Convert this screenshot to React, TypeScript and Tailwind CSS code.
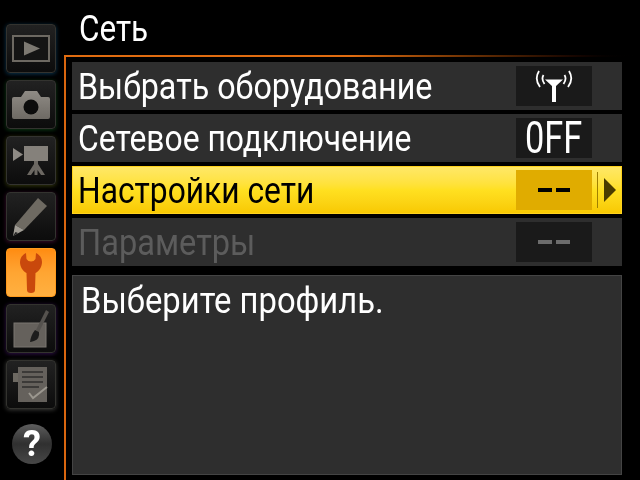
const font = { fontFamily: '"Roboto", "Liberation Sans", sans-serif' };

function Tile({ glow, active, children }: { glow: string; active?: boolean; children: React.ReactNode }) {
  return (
    <div className={`w-[50px] h-[49px] rounded-[4px] border flex items-center justify-center ${glow} ${active ? "border-[#ff9a1c] bg-gradient-to-b from-[#ff8c10] via-[#ffa532] to-[#ffb040]" : "border-[#33332f] bg-gradient-to-b from-[#222222] to-[#0c0c0c]"}`}>
      {children}
    </div>
  );
}

function Play() {
  return (
    <svg width="38" height="27" viewBox="0 0 38 27">
      <rect x="1" y="1" width="36" height="25" fill="#141414" stroke="#6d6962" strokeWidth="2" />
      <path d="M12 6.5 L28 13.5 L12 20.5 Z" fill="#7d7972" />
    </svg>
  );
}
function Camera() {
  return (
    <svg width="38" height="28" viewBox="0 0 38 28">
      <defs>
        <linearGradient id="cam" x1="0" y1="0" x2="0" y2="1">
          <stop offset="0" stopColor="#8f8b85" />
          <stop offset="1" stopColor="#6e6a64" />
        </linearGradient>
      </defs>
      <path d="M2 6 Q0 6 0 8 V26 Q0 28 2 28 H36 Q38 28 38 26 V8 Q38 6 36 6 H29 L25 0 H13 L9 6 Z" fill="url(#cam)" />
      <circle cx="19" cy="16" r="7.5" fill="#0c0c0c" />
    </svg>
  );
}
function Movie() {
  return (
    <svg width="36" height="30" viewBox="0 0 36 30">
      <path d="M0 2 L10 8.5 L0 15 Z" fill="#8e8a84" />
      <rect x="11" y="0" width="24" height="15" fill="#85817b" />
      <path d="M21 15 H25 V18 L32 29 H28 L24.5 24 V29 H21.5 V24 L18 29 H14 L21 18 Z" fill="#6c6862" />
    </svg>
  );
}
function Pencil() {
  return (
    <svg width="36" height="40" viewBox="0 0 36 40">
      <path d="M25 1 L34 9 L11 33 L2 28 Z" fill="#6e6a62" />
      <path d="M2 28 L11 33 L0 39 Z" fill="#a09c94" />
      <path d="M2.5 35 L5 36 L0 39 Z" fill="#222" />
    </svg>
  );
}
function Wrench() {
  return (
    <svg width="22" height="40" viewBox="0 0 22 40">
      <path d="M6 0 C2 2 0 5 0 9 C0 14 3 18 6.5 20 L7 37 Q7 40 11 40 Q15 40 15 37 L15.5 20 C19 18 22 14 22 9 C22 5 20 2 16 0 L15.5 6 Q14 8.5 11 8.5 Q8 8.5 6.5 6 Z" fill="#c9480c" />
    </svg>
  );
}
function Retouch() {
  return (
    <svg width="36" height="38" viewBox="0 0 36 38">
      <rect x="1" y="13" width="32" height="24" fill="#65615c" stroke="#7a7670" />
      <path d="M33 0 L36 2 L26 22 L23 20 Z" fill="#55524e" />
      <path d="M22 20 L26 22 Q27 29 21 31 Q18 32 17 32 Q18 25 22 20 Z" fill="#1c1c1c" />
    </svg>
  );
}
function Recent() {
  return (
    <svg width="36" height="36" viewBox="0 0 36 36">
      <rect x="0" y="6" width="6" height="9" fill="#6d6962" />
      <rect x="5" y="0" width="29" height="35" fill="#65615c" />
      <path d="M9 5 H30 M9 10 H30 M9 15 H30 M9 20 H26" stroke="#2f2e2c" strokeWidth="1.5" />
      <path d="M16 26 L20 31 L34 20" stroke="#9b978f" strokeWidth="2" fill="none" />
    </svg>
  );
}
function Antenna() {
  return (
    <svg width="38" height="33" viewBox="0 0 38 33">
      <path d="M10 9.5 H28 L21 16 V32 H17 V16 Z" fill="#fff" />
      <path d="M4 1 Q-1 9 5 17 M8.5 5 Q6 9 9.5 14 M34 1 Q39 9 33 17 M29.5 5 Q32 9 28.5 14" stroke="#fff" strokeWidth="1.8" fill="none" />
    </svg>
  );
}

function Label({ children, className, x }: { children: React.ReactNode; className: string; x: string }) {
  return (
    <span className={`inline-block origin-left whitespace-nowrap leading-none ${x} ${className}`} style={font}>{children}</span>
  );
}

function Row({ label, value, tone, x }: { label: string; value: React.ReactNode; tone?: "sel" | "dim"; x: string }) {
  const sel = tone === "sel";
  const dim = tone === "dim";
  return (
    <div className={`flex items-center h-[48px] w-[550px] ${sel ? "bg-gradient-to-b from-[#ffe868] via-[#ffe020] to-[#f8c800] shadow-[inset_0_0_0_1px_#ffd21e]" : "bg-[#2e2e2e]"}`}>
      <div className="pl-[6px] flex-1 min-w-0">
        <Label x={x} className={`text-[37px] ${sel ? "text-black" : dim ? "text-[#5c5c5c]" : "text-white"}`}>{label}</Label>
      </div>
      <div className={`w-[76px] h-[40px] flex items-center justify-center ${sel ? "bg-[#e0ac00]" : "bg-[#1a1a1a]"}`}>{value}</div>
      <div className="w-[30px] h-full flex items-center justify-end">
        {sel && (
          <div className="flex items-center gap-[6px] pr-[6px]">
            <div className="w-px h-[36px] bg-[#a08000]" />
            <svg width="12" height="24" viewBox="0 0 12 24"><path d="M0 0 L12 12 L0 24 Z" fill="#4a3c00" /></svg>
          </div>
        )}
      </div>
    </div>
  );
}

function Dashes({ color }: { color: string }) {
  return (
    <div className="flex gap-[4px]">
      <div className={`w-[14px] h-[4px] ${color}`} />
      <div className={`w-[14px] h-[4px] ${color}`} />
    </div>
  );
}

export default function App() {
  return (
    <div className="w-[640px] h-[480px] bg-black flex overflow-hidden blur-[0.4px]">
      <div className="w-[64px] shrink-0 pl-[6px] pt-[24px] flex flex-col gap-[7px]">
        <Tile glow="shadow-[0_1px_4px_#0a3550]"><Play /></Tile>
        <Tile glow="shadow-[0_1px_4px_#0c3a14]"><Camera /></Tile>
        <Tile glow="shadow-[0_1px_4px_#34380c]"><Movie /></Tile>
        <Tile glow="shadow-[0_1px_4px_#3a0c2c]"><Pencil /></Tile>
        <Tile glow="" active><Wrench /></Tile>
        <Tile glow="shadow-[0_1px_4px_#30104a]"><Retouch /></Tile>
        <Tile glow="shadow-[0_1px_4px_#3a3a38]"><Recent /></Tile>
        <div className="ml-[6px] mt-[8px] w-[40px] h-[40px] rounded-full bg-gradient-to-b from-[#5e5e5e] via-[#303030] to-[#484848] flex items-center justify-center text-white text-[36px] font-bold leading-none" style={font}>?</div>
      </div>
      <div className="flex-1 flex flex-col">
        <div className="h-[55px] pl-[15px] pt-[10px] text-white">
          <Label x="scale-x-[0.85]" className="text-[37px]">Сеть</Label>
        </div>
        <div className="h-[2px] bg-gradient-to-r from-[#e06c10] via-[#e06c10] to-black" />
        <div className="flex-1 border-l-2 border-[#d9660f] pl-[6px] pt-[5px] flex flex-col gap-[4px]">
          <Row x="scale-x-[0.872]" label="Выбрать оборудование" value={<Antenna />} />
          <Row x="scale-x-[0.86]" label="Сетевое подключение" value={<span className="inline-block scale-x-[0.78] text-white text-[44px] leading-none" style={font}>0FF</span>} />
          <Row x="scale-x-[0.858]" label="Настройки сети" tone="sel" value={<Dashes color="bg-black" />} />
          <Row x="scale-x-[0.88]" label="Параметры" tone="dim" value={<Dashes color="bg-[#6c6c6c]" />} />
          <div className="mt-[5px] w-[550px] h-[200px] bg-[#2e2e2e] border border-[#444] pl-[8px] pt-[7px] text-white">
            <Label x="scale-x-[0.91]" className="text-[36px]">Выберите профиль.</Label>
          </div>
        </div>
      </div>
    </div>
  );
}
